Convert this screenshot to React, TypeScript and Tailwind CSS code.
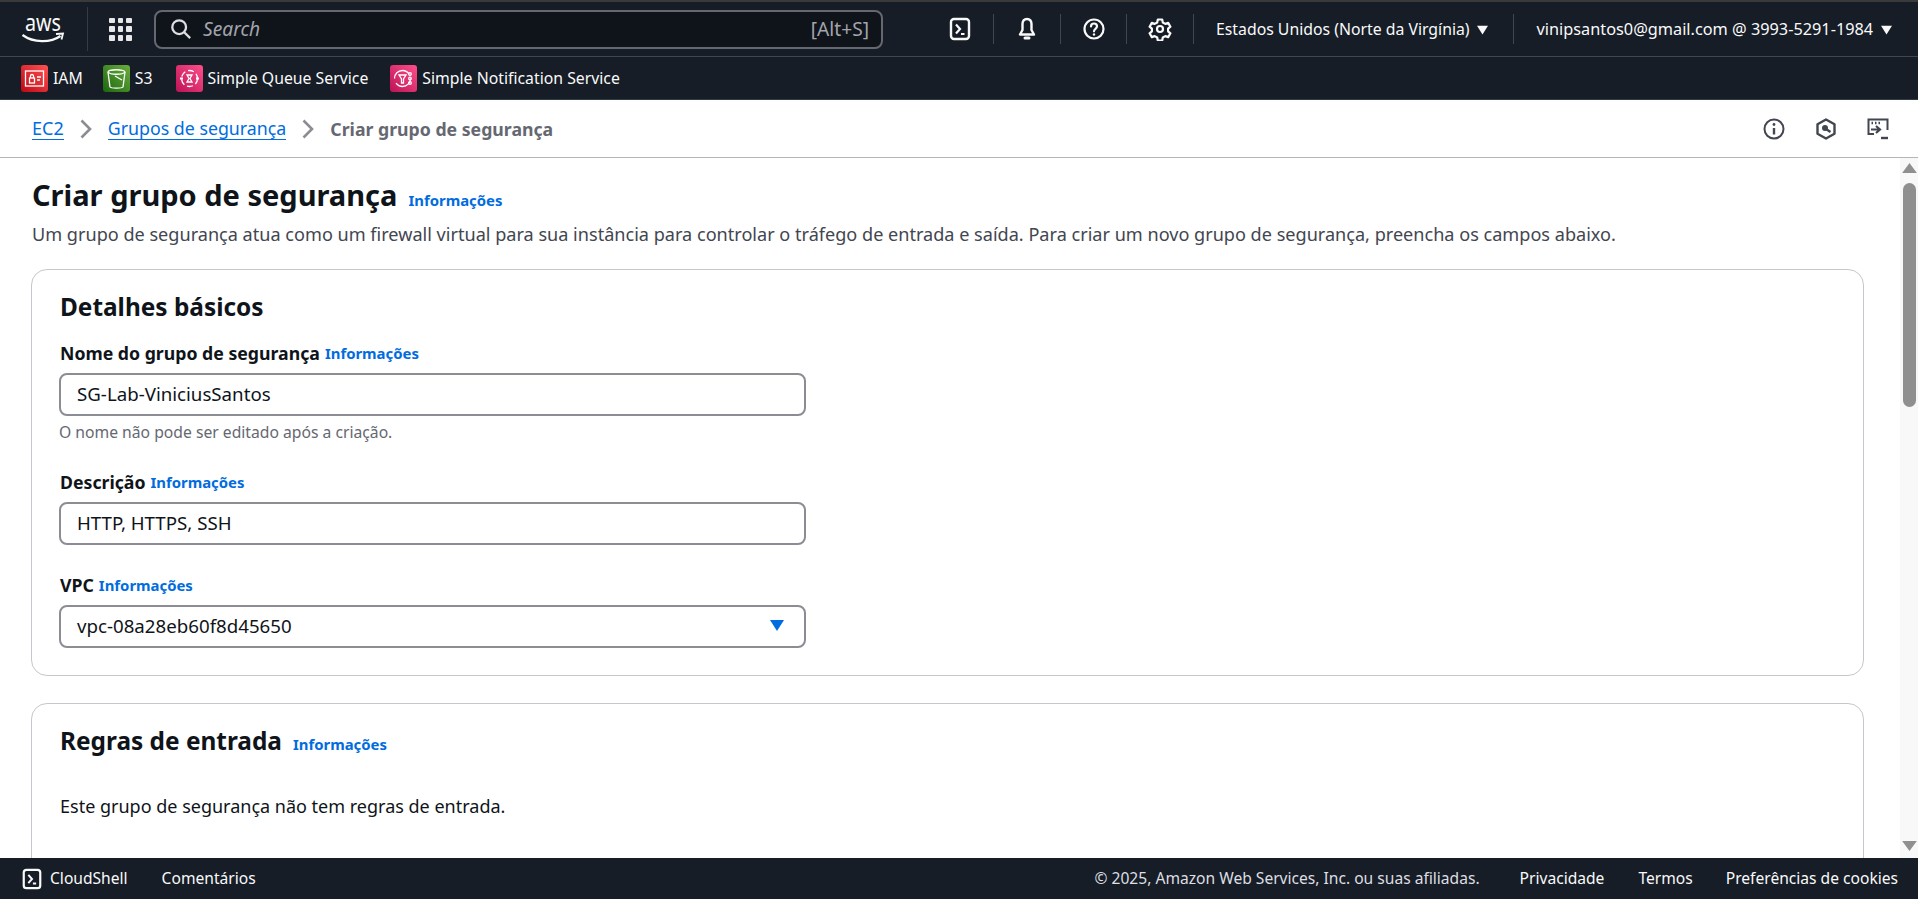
import React from "react";

const F = "font-['Noto_Sans',sans-serif]";

function Terminal({ className = "w-[20px] h-[20px]" }: { className?: string }) {
  return (
    <svg viewBox="0 0 24 24" className={className} fill="none" stroke="currentColor" strokeWidth="2.4">
      <rect x="3" y="2" width="18" height="20" rx="3" />
      <path d="M8 7.5 12 12l-4 4.5M13 17h3.5" strokeWidth="2.2" />
    </svg>
  );
}
function Bell() {
  return (
    <svg viewBox="0 0 24 24" className="w-[24px] h-[24px]" fill="none" stroke="currentColor" strokeWidth="2.4">
      <path d="M12 2c-3 0-4.500 2-4.500 5v6L5 17.500h14L16.500 13V7c0-3-1.500-5-4.500-5Z" strokeLinejoin="round" />
      <path d="M10 21h4" strokeWidth="3" strokeLinecap="round" />
    </svg>
  );
}
function Help() {
  return (
    <svg viewBox="0 0 24 24" className="w-[24px] h-[24px]" fill="none" stroke="currentColor" strokeWidth="2.2">
      <circle cx="12" cy="12" r="9.500" />
      <path d="M9 9.500c0-1.800 1.300-3 3-3s3 1.200 3 2.800c0 2.500-3 2.500-3 5" strokeLinecap="round" />
      <circle cx="12" cy="17.500" r="1.200" fill="currentColor" stroke="none" />
    </svg>
  );
}
function Gear() {
  return (
    <svg viewBox="0 0 24 24" className="w-[24px] h-[24px]" fill="none" stroke="currentColor" strokeWidth="2.200" strokeLinejoin="round">
      <path d="M9.800 2.500h4.400l.6 3 2.500 1.400 2.900-1 2.200 3.800-2.300 2v2.600l2.300 2-2.200 3.800-2.900-1-2.500 1.400-.6 3H9.800l-.6-3-2.500-1.400-2.900 1-2.200-3.800 2.300-2v-2.600l-2.300-2 2.200-3.800 2.900 1 2.500-1.400.6-3Z" />
      <circle cx="12" cy="12" r="3" />
    </svg>
  );
}
function Sep() {
  return <div className="w-px h-[30px] bg-[#424650] shrink-0" />;
}
function Tile({ from, to, children }: { from: string; to: string; children: React.ReactNode }) {
  return (
    <span className="w-[27px] h-[27px] rounded-[3px] flex items-center justify-center text-white" style={{ background: `linear-gradient(45deg, ${from}, ${to})` }}>
      <svg viewBox="0 0 27 27" className="w-[27px] h-[27px]" fill="none" stroke="currentColor" strokeWidth="1.300">
        {children}
      </svg>
    </span>
  );
}
function Fav({ icon, label, className }: { icon: React.ReactNode; label: string; className: string }) {
  return (
    <div className={`flex items-center gap-[5px] ${className}`}>
      {icon}
      <span className="text-[15.8px] leading-[22px] text-[#f9f9fa]">{label}</span>
    </div>
  );
}
function Info({ className = "" }: { className?: string }) {
  return <a className={`text-[14.9px] leading-[20px] font-bold text-[#006ce0] ${className}`}>Informações</a>;
}
function Chevron() {
  return (
    <svg viewBox="0 0 20 20" className="w-[20px] h-[20px] text-[#8c8c94] mx-[12px]" fill="none" stroke="currentColor" strokeWidth="2.600">
      <path d="m5.500 1.500 8.500 8.500-8.500 8.500" />
    </svg>
  );
}
function Field({ label, value, select }: { label: string; value: string; select?: boolean }) {
  return (
    <div>
      <div className="h-[22px] pl-[1px] flex items-center gap-[5px] text-[17.7px] leading-[22px] font-bold text-[#0f141a]">
        {label}
        <Info />
      </div>
      <div className="mt-[9px] w-[747px] h-[43px] rounded-[8px] border-2 border-[#8c8c94] bg-white flex items-center justify-between pl-[16px] pr-[20px] text-[18.7px] text-[#0f141a]">
        <span>{value}</span>
        {select && (
          <svg viewBox="0 0 14 11" className="w-[14px] h-[11px] text-[#006ce0] mb-[2px]" fill="currentColor">
            <path d="M0 0h14L7 11Z" />
          </svg>
        )}
      </div>
    </div>
  );
}

export default function App() {
  return (
    <div className={`h-[899px] w-full flex flex-col overflow-hidden bg-white ${F}`}>
      <div className="h-[2px] bg-[#3a3a3a] shrink-0" />
      <header className="h-[55px] shrink-0 bg-[#161d26] flex items-center text-[#f9f9fa] border-b border-[#424650]">
        <div className="w-[88px] h-[44px] flex items-center border-r border-[#333b47] pl-[22px]">
          <svg viewBox="0 0 42 27" className="w-[42px] h-[27px] overflow-visible" fill="none">
            <text x="3" y="15" fontSize="24" textLength="36" lengthAdjust="spacingAndGlyphs" fontFamily="'Noto Sans',sans-serif" fill="#f9f9fa">aws</text>
            <path d="M0.500 19c11 8 28 8 38 1" stroke="#f9f9fa" strokeWidth="2.200" />
            <path d="m34 18 7-.5-1.500 6" stroke="#f9f9fa" strokeWidth="1.800" />
          </svg>
        </div>
        <div className="ml-[21px] w-[23px] h-[23px] grid grid-cols-3 gap-[3px] shrink-0">
          {Array.from({ length: 9 }).map((_, i) => (
            <span key={i} className="bg-[#e8e8ea] rounded-[1px]" />
          ))}
        </div>
        <div className="ml-[22px] w-[729px] h-[39px] shrink-0 rounded-[8px] border-2 border-[#656871] bg-[#0f141a] flex items-center pl-[14px] pr-[12px]">
          <svg viewBox="0 0 24 24" className="w-[22px] h-[22px] text-[#dedee3]" fill="none" stroke="currentColor" strokeWidth="2.500">
            <circle cx="10" cy="10" r="7.500" />
            <path d="m15.500 15.500 6.500 6.500" />
          </svg>
          <span className="ml-[11px] text-[19.2px] italic text-[#a4a4ad]">Search</span>
          <span className="ml-auto text-[19.2px] text-[#a4a4ad]">[Alt+S]</span>
        </div>
        <div className="ml-[61px] w-[32px] flex justify-center mr-[17px]"><Terminal className="w-[24px] h-[24px]" /></div>
        <Sep />
        <div className="w-[66px] flex justify-center"><Bell /></div>
        <Sep />
        <div className="w-[65px] flex justify-center"><Help /></div>
        <Sep />
        <div className="w-[66px] flex justify-center"><Gear /></div>
        <Sep />
        <div className="ml-[22px] flex items-center text-[15.8px] leading-[20px] whitespace-nowrap">
          Estados Unidos (Norte da Virgínia)
          <svg viewBox="0 0 10 10" className="w-[11px] h-[11px] ml-[7px]" fill="currentColor"><path d="M0 1.500h10L5 9.500Z" /></svg>
        </div>
        <div className="ml-[25px]"><Sep /></div>
        <div className="ml-[23px] flex items-center text-[16.3px] leading-[20px] whitespace-nowrap">
          vinipsantos0@gmail.com @ 3993-5291-1984
          <svg viewBox="0 0 10 10" className="w-[11px] h-[11px] ml-[8px]" fill="currentColor"><path d="M0 1.500h10L5 9.500Z" /></svg>
        </div>
      </header>
      <nav className="h-[43px] bg-[#161d26] flex items-center pl-[21px] shrink-0 border-b border-[#333b47]">
        <Fav
          className="mr-[20px]"
          label="IAM"
          icon={
            <Tile from="#bd0816" to="#ff5252">
              <rect x="4.500" y="6" width="18" height="15" />
              <rect x="8.500" y="13" width="5" height="5" />
              <path d="M9.500 13v-2a1.500 1.500 0 0 1 3 0v2M16 12h4M16 15h3" />
            </Tile>
          }
        />
        <Fav
          className="mr-[23px]"
          label="S3"
          icon={
            <Tile from="#1b660f" to="#6cae3e">
              <path d="M5 7c0-3 17-3 17 0l-2 15c-1 1.500-12 1.500-13 0Z" />
              <path d="M5 7c2 3 15 3 17 0M12 11l7 4" />
            </Tile>
          }
        />
        <Fav
          className="mr-[22px]"
          label="Simple Queue Service"
          icon={
            <Tile from="#bc1356" to="#ff4f8b">
              <circle cx="13.500" cy="13.500" r="8" strokeDasharray="6 3" />
              <path d="M11 10h5l-2 3.500 2 3.500h-5l2-3.500Z" />
              <path d="M4 13.500h3M20 13.500h3" strokeWidth="2" />
            </Tile>
          }
        />
        <Fav
          className=""
          label="Simple Notification Service"
          icon={
            <Tile from="#bc1356" to="#ff4f8b">
              <circle cx="12.500" cy="13.500" r="8" strokeDasharray="20 5" />
              <path d="M9 10h7l-2.500 4v4h-2v-4Z" />
              <circle cx="20" cy="9" r="1.300" />
              <circle cx="20" cy="13.500" r="1.300" />
              <circle cx="20" cy="18" r="1.300" />
            </Tile>
          }
        />
      </nav>
      <div className="h-[58px] shrink-0 border-b border-[#b4b4bb] bg-white flex items-center pl-[32px] pr-[28px] text-[17.700px]">
        <a className="text-[18px] text-[#006ce0] border-b border-[#006ce0] leading-[22px]">EC2</a>
        <Chevron />
        <a className="text-[17.8px] text-[#006ce0] border-b border-[#006ce0] leading-[22px]">Grupos de segurança</a>
        <Chevron />
        <span className="font-bold text-[#656871] leading-[22px]">Criar grupo de segurança</span>
        <div className="ml-auto flex items-center gap-[28px] text-[#424650]">
          <svg viewBox="0 0 24 24" className="w-[24px] h-[24px]" fill="none" stroke="currentColor" strokeWidth="2">
            <circle cx="12" cy="12" r="9.500" />
            <path d="M12 11v6.500" strokeWidth="2.400" />
            <circle cx="12" cy="7.500" r="1.400" fill="currentColor" stroke="none" />
          </svg>
          <svg viewBox="0 0 24 24" className="w-[24px] h-[24px]" fill="none" stroke="currentColor" strokeWidth="2.400">
            <path d="m12 2.500 8.500 4.800v9.400L12 21.500l-8.500-4.800V7.300Z" strokeLinejoin="round" />
            <circle cx="11" cy="11" r="1.800" fill="currentColor" />
            <path d="m12 12 4.500 3" />
          </svg>
          <svg viewBox="0 0 24 24" className="w-[24px] h-[24px]" fill="none" stroke="currentColor" strokeWidth="2">
            <path d="M8 17H2.500V2.500h19V13" />
            <path d="M5.500 6h1.500M9 6h1.500M12.500 6H14" strokeWidth="2.400" />
            <path d="M5 12.500h8M10 9l4 3.500-4 3.500" strokeWidth="2.200" />
            <path d="M15 21h7" strokeWidth="2.400" />
          </svg>
        </div>
      </div>
      <div className="flex-1 min-h-0 flex">
        <main className="flex-1 min-w-0 overflow-hidden pl-[31px] pr-[36px]">
          <div className="pt-[19px] pl-[1px] flex items-baseline h-[56px]">
            <h1 className="text-[29px] leading-[36px] font-bold text-[#0f141a]">Criar grupo de segurança</h1>
            <Info className="ml-[11px]" />
          </div>
          <p className="pl-[1px] mt-[9px] text-[18.1px] leading-[22px] text-[#424650] whitespace-nowrap">
            Um grupo de segurança atua como um firewall virtual para sua instância para controlar o tráfego de entrada e saída. Para criar um novo grupo de segurança, preencha os campos abaixo.
          </p>
          <section className="mt-[24px] h-[407px] rounded-[16px] border border-[#c6c6cd] bg-white pl-[27px] pt-[21px]">
            <h2 className="pl-[1px] text-[24.400px] leading-[32px] font-bold text-[#0f141a]">Detalhes básicos</h2>
            <div className="mt-[19px]">
              <Field label="Nome do grupo de segurança" value="SG-Lab-ViniciusSantos" />
              <p className="mt-[6px] text-[15.700px] leading-[20px] text-[#656871]">O nome não pode ser editado após a criação.</p>
            </div>
            <div className="mt-[29px]"><Field label="Descrição" value="HTTP, HTTPS, SSH" /></div>
            <div className="mt-[29px]"><Field label="VPC" value="vpc-08a28eb60f8d45650" select /></div>
          </section>
          <section className="mt-[27px] h-[300px] rounded-[16px] border border-[#c6c6cd] bg-white pl-[28px] pt-[21px]">
            <div className="flex items-baseline">
              <h2 className="text-[24.400px] leading-[32px] font-bold text-[#0f141a]">Regras de entrada</h2>
              <Info className="ml-[11px]" />
            </div>
            <p className="mt-[38px] text-[18px] leading-[22px] text-[#0f141a]">Este grupo de segurança não tem regras de entrada.</p>
          </section>
        </main>
        <div className="w-[18px] shrink-0 bg-[#f8f8f8] flex flex-col items-center">
          <svg viewBox="0 0 16 12" className="w-[15px] h-[11px] mt-[5px] text-[#8f8f8f]" fill="currentColor"><path d="M8 0l8 11H0Z" /></svg>
          <div className="mt-[9px] w-[13px] h-[224px] rounded-[7px] bg-[#8f8f8f]" />
          <div className="flex-1" />
          <svg viewBox="0 0 16 12" className="w-[15px] h-[11px] mb-[6px] text-[#8f8f8f]" fill="currentColor"><path d="M0 0h16L8 11Z" /></svg>
        </div>
      </div>
      <footer className="h-[41px] shrink-0 bg-[#161d26] flex items-center pl-[21px] pr-[20px] text-[15.600px] text-[#f9f9fa] whitespace-nowrap">
        <Terminal className="w-[22px] h-[22px]" />
        <span className="ml-[7px]">CloudShell</span>
        <span className="ml-[34px]">Comentários</span>
        <span className="ml-auto text-[#dedee3]">© 2025, Amazon Web Services, Inc. ou suas afiliadas.</span>
        <span className="ml-[40px]">Privacidade</span>
        <span className="ml-[34px]">Termos</span>
        <span className="ml-[33px]">Preferências de cookies</span>
      </footer>
    </div>
  );
}
